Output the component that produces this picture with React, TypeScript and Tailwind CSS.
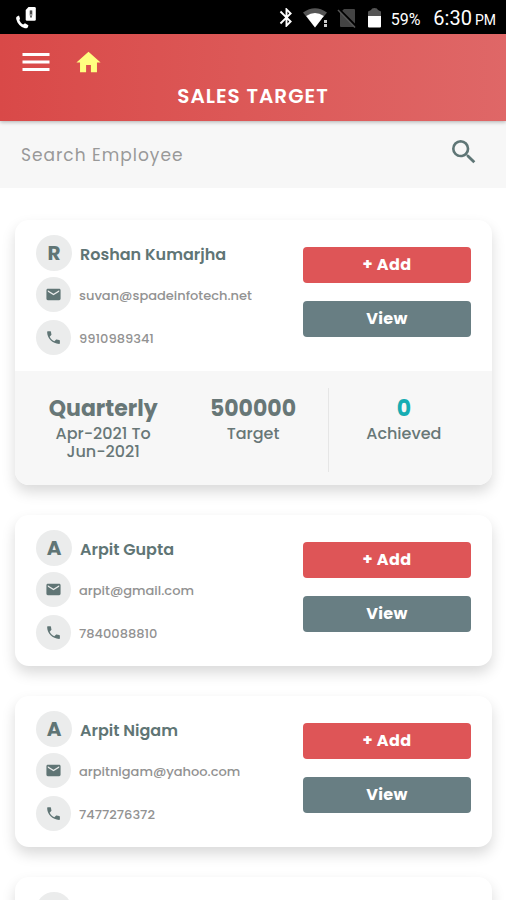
import { MdBluetooth, MdEmail, MdHome, MdMenu, MdPhone, MdSearch } from "react-icons/md";

interface Target {
  period: string;
  range: string;
  target: number;
  achieved: number;
}

interface Employee {
  name: string;
  email: string;
  phone: string;
  sales?: Target;
}

const employees: Employee[] = [
  {
    name: "Roshan Kumarjha",
    email: "suvan@spadeinfotech.net",
    phone: "9910989341",
    sales: { period: "Quarterly", range: "Apr-2021 To Jun-2021", target: 500000, achieved: 0 },
  },
  { name: "Arpit Gupta", email: "arpit@gmail.com", phone: "7840088810" },
  { name: "Arpit Nigam", email: "arpitnigam@yahoo.com", phone: "7477276372" },
];

const StatusBar = () => (
  <div className="flex h-[34px] shrink-0 items-center bg-black pt-px pr-[10px] pl-4 font-[Roboto,sans-serif] text-white">
    <svg width="20" height="22" viewBox="0 0 20 22" fill="currentColor" aria-hidden="true">
      <path d="M1 9.500C.2 10 0 11 .3 12.300c1.200 4.700 4.200 7.700 8.600 8.900 1.400.3 2.600 0 3.100-1.100l.4-1.900-3.400-2-1.900 1.300c-1.700-1-2.900-2.300-3.700-4.200l.6-1.700-1-3.200Z" />
      <path d="M12.500 0H18.500Q19.800 0 19.800 1.300V12.500Q19.800 13.800 18.500 13.800H11Q9.700 13.800 9.700 12.500V3Z" />
      <path d="M13.500 3.500h3v5h-3Z" fill="#999" />
      <path d="M15 3.500v3.500M15 8.500v2" stroke="#333" strokeWidth="1.500" />
    </svg>
    <div className="ml-auto flex items-center">
      <MdBluetooth size={23} className="mr-[5px]" aria-hidden="true" />
      <svg width="26" height="20" viewBox="0 0 26 20" className="mr-2" aria-hidden="true">
        <path d="M0 4.500Q12-4 24 4.500L12 19.500Z" fill="#555" />
        <path d="M3.200 8Q12 2 20.800 8L12 19.500Z" fill="#fff" />
        <path d="M19 10h7v10h-7Z" fill="#000" />
        <path d="M21 12h3v3h-3ZM21 16h3v3h-3Z" fill="#ccc" />
      </svg>
      <svg width="20" height="20" viewBox="0 0 20 20" className="mr-[11px]" aria-hidden="true">
        <path d="M7 1H17Q18 1 18 2V18Q18 19 17 19H4Q3 19 3 18V5Z" fill="#444" />
        <path d="M2 1 19 18" stroke="#000" strokeWidth="2" />
        <path d="M1 2 18 19.500" stroke="#555" strokeWidth="1.500" />
      </svg>
      <svg width="13" height="20" viewBox="0 0 13 20" className="mr-[10px]" aria-hidden="true">
        <path d="M3 2Q3.500 0 6.500 0T10 2L13 3.500V8H0V3.500Z" fill="#555" />
        <path d="M0 8H13V18.500Q13 19.500 12 19.500H1Q0 19.500 0 18.500Z" fill="#fff" />
      </svg>
      <div className="flex items-baseline">
        <span className="mr-[13px] text-base">59%</span>
        <span className="text-xl">6:30</span>
        <span className="ml-[3px] text-sm">PM</span>
      </div>
    </div>
  </div>
);

const Header = () => (
  <header className="relative z-10 h-[87px] shrink-0 bg-linear-to-r from-[#d94948] to-[#df6767] text-white shadow-[0_1px_4px_rgba(0,0,0,0.3)]">
    <div className="flex h-14 items-center gap-5 pl-[18px]">
      <button type="button" aria-label="Menu">
        <MdMenu size={36} />
      </button>
      <button type="button" aria-label="Home" className="text-[#ffff80]">
        <MdHome size={29} />
      </button>
    </div>
    <h1 className="-mt-2 text-center text-xl font-semibold tracking-wider">SALES TARGET</h1>
  </header>
);

const SearchBar = () => (
  <form className="flex h-[67px] shrink-0 items-center bg-[#f7f7f7] pr-[26px] pl-[21px]">
    <input
      type="text"
      aria-label="Search Employee"
      placeholder="Search Employee"
      className="min-w-0 flex-1 bg-transparent pt-0.5 text-[17px] tracking-[1px] text-[#666] outline-none placeholder:text-[#999]"
    />
    <button type="button" aria-label="Search" className="mb-1.5 text-[#5f7676]">
      <MdSearch size={32} />
    </button>
  </form>
);

const Stats = ({ sales }: { sales: Target }) => (
  <div className="grid h-[114px] grid-cols-3 rounded-b-[14px] bg-[#f7f7f7] px-[13px] pt-[17px] pb-[13px] text-center text-base leading-[18px] font-medium text-[#687777]">
    <div className="px-4 pt-[9px]">
      <p className="mb-1 text-[22px] leading-6 font-bold">{sales.period}</p>
      <p>{sales.range}</p>
    </div>
    <div className="border-r border-[#e6e6e6] pt-[9px]">
      <p className="mb-1 text-[22px] leading-6 font-bold">{sales.target}</p>
      <p>Target</p>
    </div>
    <div className="pt-[9px]">
      <p className="mb-1 text-[22px] leading-6 font-bold text-[#17adb3]">{sales.achieved}</p>
      <p>Achieved</p>
    </div>
  </div>
);

const EmployeeCard = ({ employee }: { employee: Employee }) => (
  <article className="shrink-0 rounded-[14px] bg-white shadow-[0_7px_14px_rgba(0,0,0,0.15)]">
    <div className="flex h-[151px] px-[21px]">
      <div className="min-w-0 flex-1 pt-[15px] text-[#607575]">
        <div className="mb-1.5 flex items-center gap-2">
          <span className="flex size-9 shrink-0 items-center justify-center rounded-full bg-[#ebecec] text-xl font-bold">
            {employee.name.charAt(0)}
          </span>
          <h2 className="truncate pt-1 text-base font-semibold">{employee.name}</h2>
        </div>
        <div className="mb-2 flex items-center gap-2">
          <span className="flex size-[35px] shrink-0 items-center justify-center rounded-full bg-[#ebecec]">
            <MdEmail size={17} />
          </span>
          <span className="truncate pt-0.5 text-[13px] font-medium text-[#929292]">{employee.email}</span>
        </div>
        <div className="flex items-center gap-2">
          <span className="flex size-[35px] shrink-0 items-center justify-center rounded-full bg-[#ebecec]">
            <MdPhone size={17} />
          </span>
          <span className="pt-0.5 text-[13px] font-medium text-[#929292]">{employee.phone}</span>
        </div>
      </div>
      <div className="flex w-[168px] shrink-0 flex-col gap-[18px] pt-[27px]">
        <button type="button" className="h-9 rounded bg-[#de5557] text-base font-bold tracking-wide text-white">
          + Add
        </button>
        <button type="button" className="h-9 rounded bg-[#687e83] text-base font-bold tracking-wide text-white">
          View
        </button>
      </div>
    </div>
    {employee.sales && <Stats sales={employee.sales} />}
  </article>
);

const CardPlaceholder = () => (
  <div className="h-[151px] shrink-0 rounded-[14px] bg-white px-[21px] pt-[15px] shadow-[0_7px_14px_rgba(0,0,0,0.15)]">
    <div className="size-9 rounded-full bg-[#ebecec]" />
  </div>
);

export default function App() {
  return (
    <div className="flex h-screen flex-col overflow-hidden bg-white font-[Poppins,Inter,sans-serif]">
      <StatusBar />
      <Header />
      <SearchBar />
      <main className="flex min-h-0 flex-1 flex-col gap-[30px] overflow-y-auto pt-8 pr-[14px] pl-[15px] [scrollbar-width:none]">
        {employees.map((employee) => (
          <EmployeeCard key={employee.phone} employee={employee} />
        ))}
        <CardPlaceholder />
      </main>
    </div>
  );
}
